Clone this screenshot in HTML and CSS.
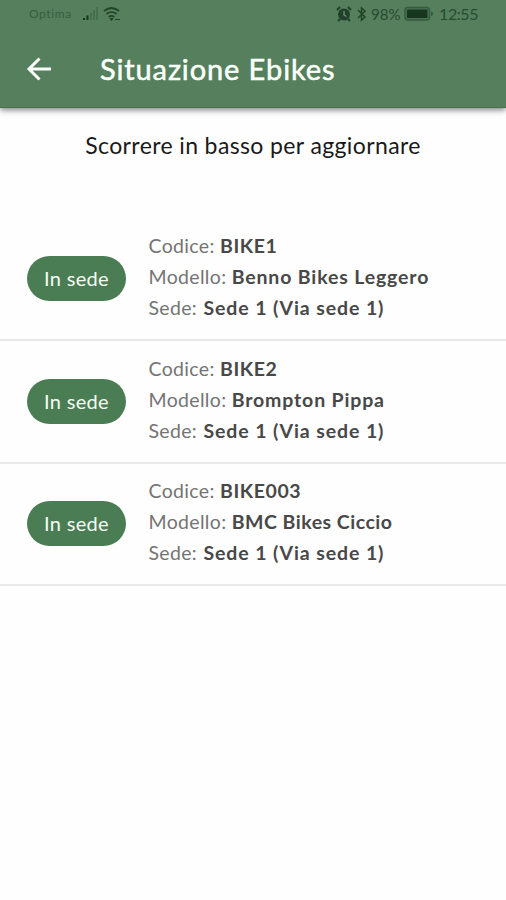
FILE: index.html
```html
<!DOCTYPE html>
<html lang="it">
<head>
<meta charset="utf-8">
<title>Situazione Ebikes</title>
<link rel="stylesheet" href="styles.css">
</head>
<body>
<header class="top">
  <div class="status">
    <span class="carrier">Optima</span>
    <svg class="signal" width="16" height="14" viewBox="0 0 16 14"><path d="M0 11h2v2H0zM3.500 8.500h2V13h-2z" fill="#19351f"/><path d="M7 6h2v7H7zM10 3h2v10h-2zM13 0h2v13h-2z" fill="#466f4e"/></svg>
    <svg class="wifi" width="18" height="16" viewBox="0 0 18 16" fill="none" stroke="#21432a" stroke-width="1.700"><path d="M1 5Q8.500-1 16 5M3.400 8Q8.500 4 13.600 8M5.700 11Q8.500 8.700 11.300 11"/><path d="M7 12.500h3l-1.500 2zM12 13.500h5" fill="#21432a" stroke-width="1"/></svg>
    <span class="spacer"></span>
    <svg class="alarm" width="16" height="16" viewBox="0 0 16 16"><circle cx="8" cy="8.500" r="6" fill="#20412a"/><path d="M1 4l3-3M15 4l-3-3M4 13l-2 2M12 13l2 2" stroke="#20412a" stroke-width="2"/><path d="M8 5v4l2.500 1.500" fill="none" stroke="#6b9872" stroke-width="1.300"/></svg>
    <svg class="bluetooth" width="10" height="16" viewBox="0 0 10 16" fill="none" stroke="#21432a" stroke-width="1.500"><path d="M1 4l7 7-3.500 3V2L8 5l-7 7"/></svg>
    <span class="percent">98%</span>
    <svg class="battery" width="30" height="16" viewBox="0 0 30 16"><rect x="1" y="1.500" width="24.500" height="12.500" rx="3" fill="#4a7152" stroke="#345b3e" stroke-width="1.500"/><rect x="3" y="3.500" width="20.500" height="8.500" rx="1" fill="#173620"/><path d="M27 5.500q2 0 2 2.200t-2 2.300z" fill="#345b3e"/></svg>
    <span class="clock">12:55</span>
  </div>
  <div class="bar">
    <svg class="back" width="26" height="26" viewBox="0 0 26 26" fill="none" stroke="#fbfffa" stroke-width="3"><path d="M25 13H3M13.500 2.500L3 13l10.500 10.500"/></svg>
    <h1 class="title">Situazione Ebikes</h1>
  </div>
</header>
<main>
  <p class="hint">Scorrere in basso per aggiornare</p>
  <ul class="list">
    <li class="item"><span class="chip">In sede</span><div class="info">
      <div class="line">Codice: <b class="code">BIKE1</b></div>
      <div class="line">Modello: <b>Benno Bikes Leggero</b></div>
      <div class="line">Sede: <b class="place">Sede 1 (Via sede 1)</b></div></div></li>
    <li class="item"><span class="chip">In sede</span><div class="info">
      <div class="line">Codice: <b class="code">BIKE2</b></div>
      <div class="line">Modello: <b>Brompton Pippa</b></div>
      <div class="line">Sede: <b class="place">Sede 1 (Via sede 1)</b></div></div></li>
    <li class="item"><span class="chip">In sede</span><div class="info">
      <div class="line">Codice: <b class="code">BIKE003</b></div>
      <div class="line">Modello: <b class="compact">BMC Bikes Ciccio</b></div>
      <div class="line">Sede: <b class="place">Sede 1 (Via sede 1)</b></div></div></li>
  </ul>
</main>
</body>
</html>
```
FILE: styles.css
```css
* { box-sizing: border-box; }
body { margin: 0; height: 900px; background: #fefefe; font-family: Lato, "Liberation Sans", sans-serif; overflow: hidden; }
.top { height: 108px; background: #557f5d; border-bottom: 1px solid #477150; box-shadow: 0 2px 6px rgba(0, 0, 0, .5); }
.status { height: 27px; display: flex; align-items: center; padding: 0 27px 0 29px; color: #294b32; white-space: nowrap; }
.carrier { width: 54px; font-size: 12px; letter-spacing: .6px; color: #365e40; }
.wifi { margin-left: 4px; }
.spacer { flex: 1; }
.bluetooth { margin: 0 4px 0 5px; }
.percent { width: 32px; font-size: 15px; }
.battery { margin: 0 5px 0 1px; }
.clock { width: 40px; font-size: 16px; letter-spacing: -.4px; }
.bar { height: 80px; display: flex; align-items: center; padding: 3px 0 0 26px; }
.title { margin: 0 0 0 48px; color: #fbfffa; font-size: 29px; font-weight: 400; letter-spacing: .87px; -webkit-text-stroke: .5px #fbfffa; }
.hint { margin: 0; padding-top: 22px; height: 110.500px; text-align: center; font-size: 23px; line-height: 30px; letter-spacing: .38px; color: #191919; }
.list { list-style: none; margin: 0; padding: 0; }
.item { height: 122.500px; display: flex; align-items: center; padding: 0 0 0 27px; border-bottom: 2px solid #e9e9e9; }
.chip { width: 99px; height: 45px; border-radius: 23px; background: #4b7d55; color: #f5fbf4; font-size: 20px; line-height: 44px; text-align: center; letter-spacing: .3px; }
.info { margin: -4px 0 0 22.500px; }
.line { height: 31px; line-height: 31px; font-size: 19.500px; letter-spacing: .33px; color: #747474; white-space: nowrap; }
.line b { color: #484848; font-weight: 700; letter-spacing: .85px; }
.line .code { letter-spacing: .6px; }
.line .compact { letter-spacing: .5px; }
.line .place { margin-left: 1px; letter-spacing: .9px; }
```
